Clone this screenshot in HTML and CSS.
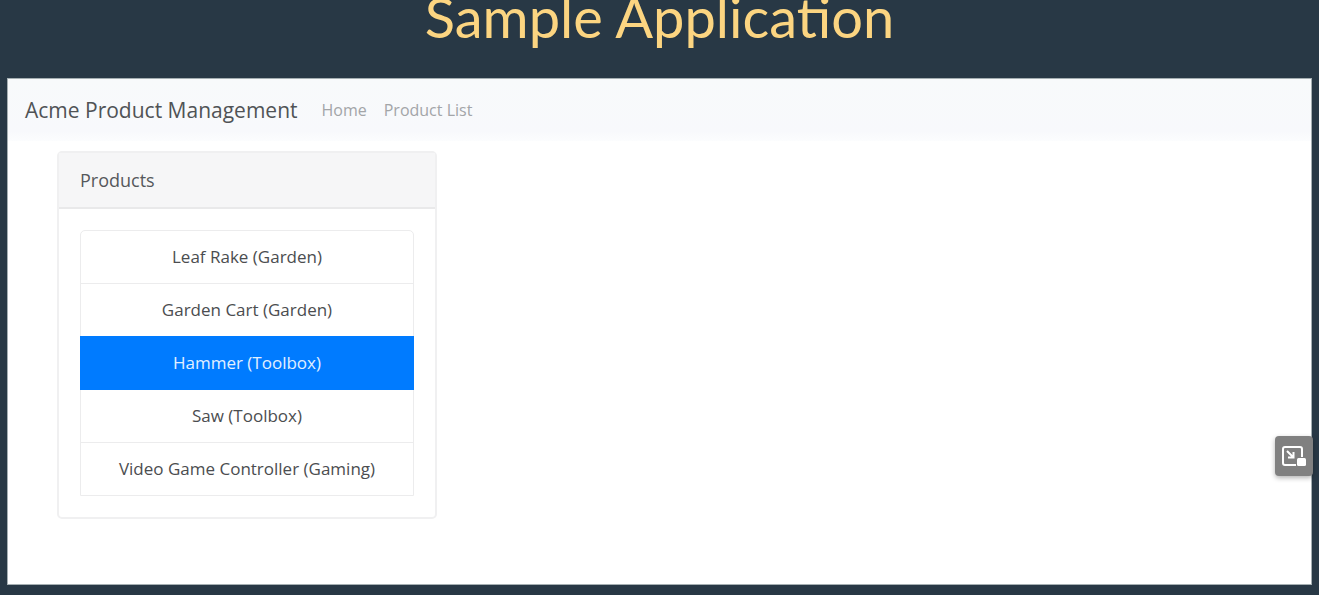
FILE: index.html
```html
<!DOCTYPE html>
<html lang="en">
<head>
<meta charset="utf-8">
<meta name="viewport" content="width=device-width, initial-scale=1">
<title>Sample Application</title>
<link rel="stylesheet" href="styles.css">
</head>
<body>
<h1 class="slide-title">Sample Application</h1>
<div class="app">
  <nav class="navbar">
    <a class="brand" href="#">Acme Product Management</a>
    <a class="nav-link" href="#">Home</a>
    <a class="nav-link" href="#">Product List</a>
  </nav>
  <main class="content">
    <section class="card">
      <h2 class="card-header">Products</h2>
      <div class="card-body">
        <div class="list">
          <button class="item" type="button">Leaf Rake (Garden)</button>
          <button class="item" type="button">Garden Cart (Garden)</button>
          <button class="item active" type="button">Hammer (Toolbox)</button>
          <button class="item" type="button">Saw (Toolbox)</button>
          <button class="item" type="button">Video Game Controller (Gaming)</button>
        </div>
      </div>
    </section>
  </main>
  <button class="pip" type="button" aria-label="Picture in picture">
    <svg width="26" height="22" viewBox="0 0 26 22" fill="none" stroke="#fff" stroke-width="2">
      <path d="M15 20H4Q2 20 2 18V4Q2 2 4 2H19Q21 2 21 4V12"/>
      <path d="M6 6L12 12M12.500 7V12.500H7"/>
      <rect x="16" y="13" width="9" height="8" rx="1.500" fill="#fff" stroke="none"/>
    </svg>
  </button>
</div>
</body>
</html>
```
FILE: styles.css
```css
* {
  box-sizing: border-box;
}

body {
  margin: 0;
  min-height: 100vh;
  display: flex;
  flex-direction: column;
  padding: 0 7px 10px;
  background: #283845;
  font-family: "Open Sans", "Noto Sans", sans-serif;
  overflow: hidden;
}

.slide-title {
  margin: 0;
  padding-bottom: 44px;
  color: #fcd581;
  font: 400 56px/34px Lato, sans-serif;
  text-align: center;
}

.app {
  position: relative;
  flex: 1;
  border: 1px solid #a5afb2;
  background: #fff;
}

.navbar {
  display: flex;
  align-items: center;
  height: 62px;
  padding: 0 17px;
  background: linear-gradient(#f8fafb, #f8f9fc 85%, #fcfdfe);
}

.brand {
  margin-right: 24px;
  color: #505356;
  font-size: 21px;
  text-decoration: none;
}

.nav-link {
  margin-right: 17px;
  color: #a3a5a8;
  font-size: 16px;
  text-decoration: none;
}

.content {
  padding: 10px 49px;
}

.card {
  width: 380px;
  max-width: 100%;
  border: 2px solid #f0f0f1;
  border-radius: 5px;
}

.card-header {
  margin: 0;
  padding: 13px 21px;
  border-bottom: 2px solid #e9e9ea;
  background: #f6f6f7;
  color: #55585b;
  font-size: 18px;
  font-weight: 400;
  line-height: 28px;
}

.card-body {
  padding: 21px;
}

.list {
  display: flex;
  flex-direction: column;
  border: 1px solid #ececed;
  border-radius: 5px 5px 0 0;
}

.item {
  padding: 13px 20px;
  border: 0;
  border-bottom: 1px solid #ececed;
  background: transparent;
  color: #4b4d50;
  font: 17px/26px "Open Sans", "Noto Sans", sans-serif;
  text-align: center;
}

.item:last-child {
  border-bottom: 0;
}

.item.active {
  margin: -1px -1px 0;
  border-top: 1px solid #007bff;
  border-color: #007bff;
  background: #007bff;
  color: #e2f0ff;
}

.pip {
  position: absolute;
  right: -2px;
  bottom: 108px;
  display: flex;
  align-items: center;
  justify-content: center;
  width: 38px;
  height: 40px;
  padding: 0;
  border: 0;
  border-radius: 4px;
  background: #808080;
  box-shadow: 0 2px 5px rgba(0, 0, 0, 0.3);
}
```
